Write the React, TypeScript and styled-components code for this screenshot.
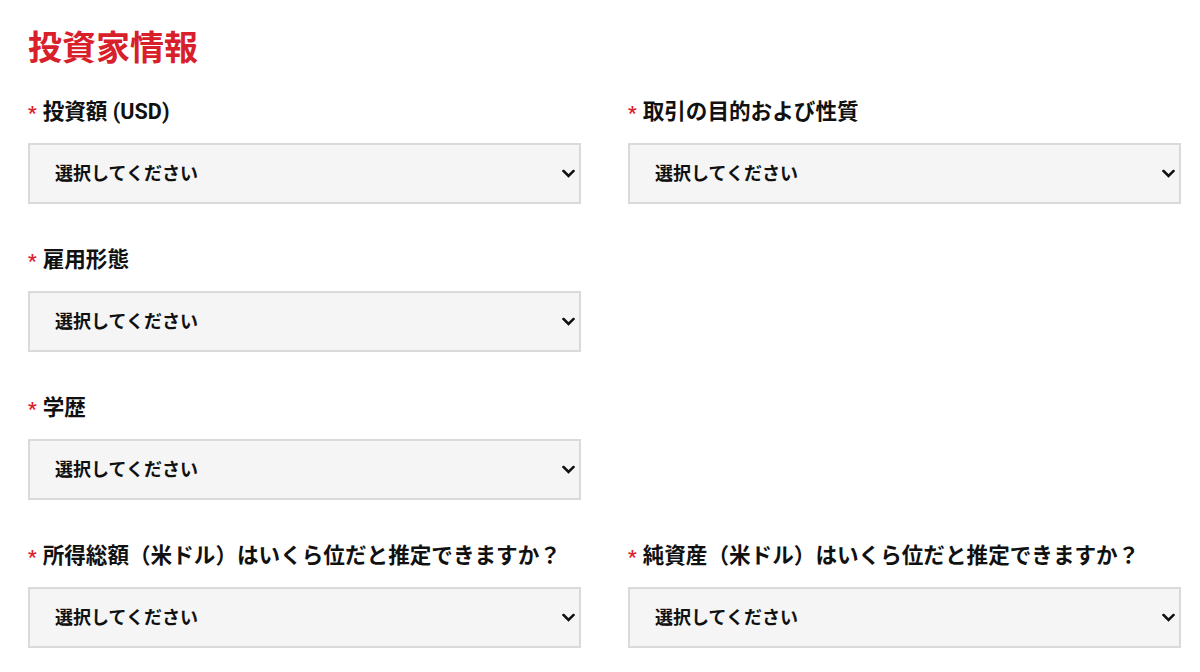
import React from "react";
import styled, { createGlobalStyle } from "styled-components";

const GlobalStyle = createGlobalStyle`
  html, body {
    margin: 0;
    padding: 0;
    background: #fff;
  }
  body {
    font-family: Roboto, "Noto Sans CJK JP", sans-serif;
    color: #111;
  }
`;

const Page = styled.div`
  padding: 28px 19px 0 28px;
  width: 1200px;
  box-sizing: border-box;
`;

const Title = styled.h2`
  margin: 0 0 29px 0;
  font-size: 34px;
  line-height: 40px;
  font-weight: 700;
  color: #d8202b;
  letter-spacing: 0;
`;

const Grid = styled.div`
  display: grid;
  grid-template-columns: 553px 553px;
  column-gap: 47px;
  row-gap: 41px;
`;

const Field = styled.div<{ $col?: number }>`
  display: flex;
  flex-direction: column;
  gap: 16px;
  grid-column: ${({ $col }) => $col || "auto"};
`;

const Label = styled.label`
  display: flex;
  align-items: center;
  gap: 6px;
  font-size: 21.6px;
  line-height: 30px;
  font-weight: 700;
  color: #111;
  white-space: nowrap;
`;

const Star = styled.span`
  color: #e0202c;
  font-size: 19px;
  font-family: Roboto, sans-serif;
  font-weight: 700;
  position: relative;
  top: 1px;
`;

const SelectWrap = styled.div`
  position: relative;
  height: 61px;
`;

const Select = styled.select`
  appearance: none;
  -webkit-appearance: none;
  width: 100%;
  height: 100%;
  box-sizing: border-box;
  border: 2px solid #dadada;
  border-radius: 0;
  background: #f5f5f5;
  padding: 0 40px 0 25px;
  font-family: Roboto, "Noto Sans CJK JP", sans-serif;
  font-size: 18px;
  font-weight: 700;
  color: #111;
  outline: none;
`;

const Chevron = styled.svg`
  position: absolute;
  right: 6px;
  top: 50%;
  transform: translateY(-50%);
  width: 13px;
  height: 9px;
  pointer-events: none;
`;

type FieldDef = { label: React.ReactNode; col?: number };

const fields: FieldDef[] = [
  { label: "投資額 (USD)", col: 1 },
  { label: "取引の目的および性質", col: 2 },
  { label: "雇用形態", col: 1 },
  { label: "学歴", col: 1 },
  { label: "所得総額（米ドル）はいくら位だと推定できますか？", col: 1 },
  { label: "純資産（米ドル）はいくら位だと推定できますか？", col: 2 },
];

function SelectField({ label, col }: FieldDef) {
  return (
    <Field $col={col}>
      <Label>
        <Star>*</Star>
        <span>{label}</span>
      </Label>
      <SelectWrap>
        <Select defaultValue="">
          <option value="">選択してください</option>
        </Select>
        <Chevron viewBox="0 0 13 9">
          <path d="M1.5 1.5 L6.5 6.5 L11.5 1.5" fill="none" stroke="#111" strokeWidth="2.6" strokeLinecap="square" />
        </Chevron>
      </SelectWrap>
    </Field>
  );
}

export default function App() {
  return (
    <Page>
      <GlobalStyle />
      <Title>投資家情報</Title>
      <Grid>
        {fields.map((f, i) => (
          <SelectField key={i} label={f.label} col={f.col} />
        ))}
      </Grid>
    </Page>
  );
}
